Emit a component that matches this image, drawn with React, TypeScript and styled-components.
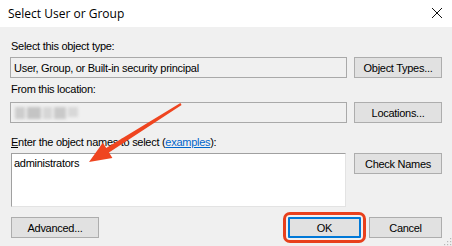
import React from "react";
import styled, { createGlobalStyle } from "styled-components";

const UI_FONT = `"Liberation Sans", Arial, sans-serif`;
const TITLE_FONT = `"Open Sans", "Noto Sans", sans-serif`;

const Global = createGlobalStyle`
  html, body { margin: 0; padding: 0; background: #f0f0f0; }
  body { font-family: ${UI_FONT}; font-size: 11px; letter-spacing: -0.28px; color: #000; }
  * { box-sizing: border-box; }
`;

const Dialog = styled.div`
  position: relative;
  width: 452px;
  height: 246px;
  display: flex;
  flex-direction: column;
  overflow: hidden;
`;

const TitleBar = styled.div`
  height: 27px;
  background: #ffffff;
  display: flex;
  align-items: center;
  justify-content: space-between;
  padding: 0 8px 1px 8px;
`;

const Title = styled.span`
  font-family: ${TITLE_FONT};
  font-size: 12px;
  letter-spacing: 0;
  color: #000;
`;

const CloseButton = styled.span`
  display: flex;
  width: 12px;
  height: 12px;
  margin-right: 1px;
  margin-bottom: 1px;
`;

const Body = styled.div`
  flex: 1;
  background: #f0f0f0;
  padding: 0 10px;
  display: flex;
  flex-direction: column;
`;

const Label = styled.div<{ $mt: number; $mb: number }>`
  height: 16px;
  line-height: 16px;
  padding-left: 1px;
  margin-top: ${(p) => p.$mt}px;
  margin-bottom: ${(p) => p.$mb}px;
  white-space: nowrap;
`;

const Link = styled.span`
  color: #0066cc;
  text-decoration: underline;
`;

const FieldRow = styled.div`
  display: grid;
  grid-template-columns: 337px 88px;
  column-gap: 7px;
  align-items: start;
`;

const ReadOnlyBox = styled.div`
  height: 21px;
  border: 1px solid #a9a9a9;
  background: #f0f0f0;
  padding: 0 3px;
  display: flex;
  align-items: center;
  white-space: nowrap;
  overflow: hidden;
`;

const NamesBox = styled.div`
  height: 54px;
  margin-left: 1px;
  margin-right: 1px;
  background: #ffffff;
  border-top: 1px solid #a0a0a0;
  border-left: 1px solid #a0a0a0;
  border-right: 1px solid #e3e3e3;
  border-bottom: 1px solid #e3e3e3;
  padding: 2px 2px;
  line-height: 14px;
`;

const Button = styled.div<{ $width?: number; $default?: boolean }>`
  height: 21px;
  width: ${(p) => (p.$width ? `${p.$width}px` : "auto")};
  background: #e1e1e1;
  border: ${(p) => (p.$default ? "2px solid #0078d7" : "1px solid #adadad")};
  display: flex;
  align-items: center;
  justify-content: center;
  white-space: nowrap;
  border-radius: ${(p) => (p.$default ? "1px" : "0")};
`;

const Highlight = styled.div`
  outline: 3px solid #e8401c;
  outline-offset: 2px;
  border-radius: 2px;
`;

const Footer = styled.div`
  margin-top: 10px;
  padding-left: 1px;
  display: flex;
  align-items: center;
  gap: 8px;
`;

const Spacer = styled.div`
  flex: 1;
`;

const BlurRow = styled.div`
  display: flex;
  gap: 2px;
  filter: blur(1.4px);
  padding-left: 1px;
`;

const BlurBlock = styled.span<{ $w: number; $shade: string; $h?: number }>`
  display: block;
  width: ${(p) => p.$w}px;
  height: ${(p) => p.$h ?? 12}px;
  background: ${(p) => p.$shade};
`;

const Overlay = styled.svg`
  position: absolute;
  left: 0;
  top: 0;
  width: 452px;
  height: 246px;
  pointer-events: none;
`;

const Grip = styled.svg`
  position: absolute;
  right: 0;
  bottom: 0;
  width: 9px;
  height: 9px;
`;

export default function App() {
  return (
    <>
      <Global />
      <Dialog>
        <TitleBar>
          <Title>Select User or Group</Title>
          <CloseButton>
            <svg width="12" height="12" viewBox="0 0 12 12">
              <path d="M1 1 L11 11 M11 1 L1 11" stroke="#111" strokeWidth="1" fill="none" />
            </svg>
          </CloseButton>
        </TitleBar>
        <Body>
          <Label $mt={11} $mb={3}>Select this object type:</Label>
          <FieldRow>
            <ReadOnlyBox>User, Group, or Built-in security principal</ReadOnlyBox>
            <Button>Object Types...</Button>
          </FieldRow>
          <Label $mt={3} $mb={5}>From this location:</Label>
          <FieldRow>
            <ReadOnlyBox>
              <BlurRow>
                <BlurBlock $w={10} $shade="#cdcdcd" />
                <BlurBlock $w={14} $shade="#c4c4c4" />
                <BlurBlock $w={9} $shade="#d6d6d6" />
                <BlurBlock $w={12} $shade="#c9c9c9" />
                <BlurBlock $w={10} $shade="#d8d8d8" $h={10} />
              </BlurRow>
            </ReadOnlyBox>
            <Button>Locations...</Button>
          </FieldRow>
          <Label $mt={11} $mb={3}>
            <u>E</u>nter the object names to select (<Link>examples</Link>):
          </Label>
          <FieldRow>
            <NamesBox>administrators</NamesBox>
            <Button>Check Names</Button>
          </FieldRow>
          <Footer>
            <Button $width={88}>Advanced...</Button>
            <Spacer />
            <Highlight>
              <Button $width={73} $default>OK</Button>
            </Highlight>
            <Button $width={73}>Cancel</Button>
          </Footer>
        </Body>
        <Overlay viewBox="0 0 452 246">
          <polygon
            points="181.6,104.9 180.4,103.1 106.2,148.0 102.8,142.7 89,162 112.4,157.9 109.0,152.6"
            fill="#ef4520"
          />
        </Overlay>
        <Grip viewBox="0 0 9 9">
          <rect x="7" y="1" width="1.2" height="1.2" fill="#b8b8b8" />
          <rect x="4" y="4" width="1.2" height="1.2" fill="#b8b8b8" />
          <rect x="7" y="4" width="1.2" height="1.2" fill="#b8b8b8" />
          <rect x="1" y="7" width="1.2" height="1.2" fill="#b8b8b8" />
          <rect x="4" y="7" width="1.2" height="1.2" fill="#b8b8b8" />
          <rect x="7" y="7" width="1.2" height="1.2" fill="#b8b8b8" />
        </Grip>
      </Dialog>
    </>
  );
}
